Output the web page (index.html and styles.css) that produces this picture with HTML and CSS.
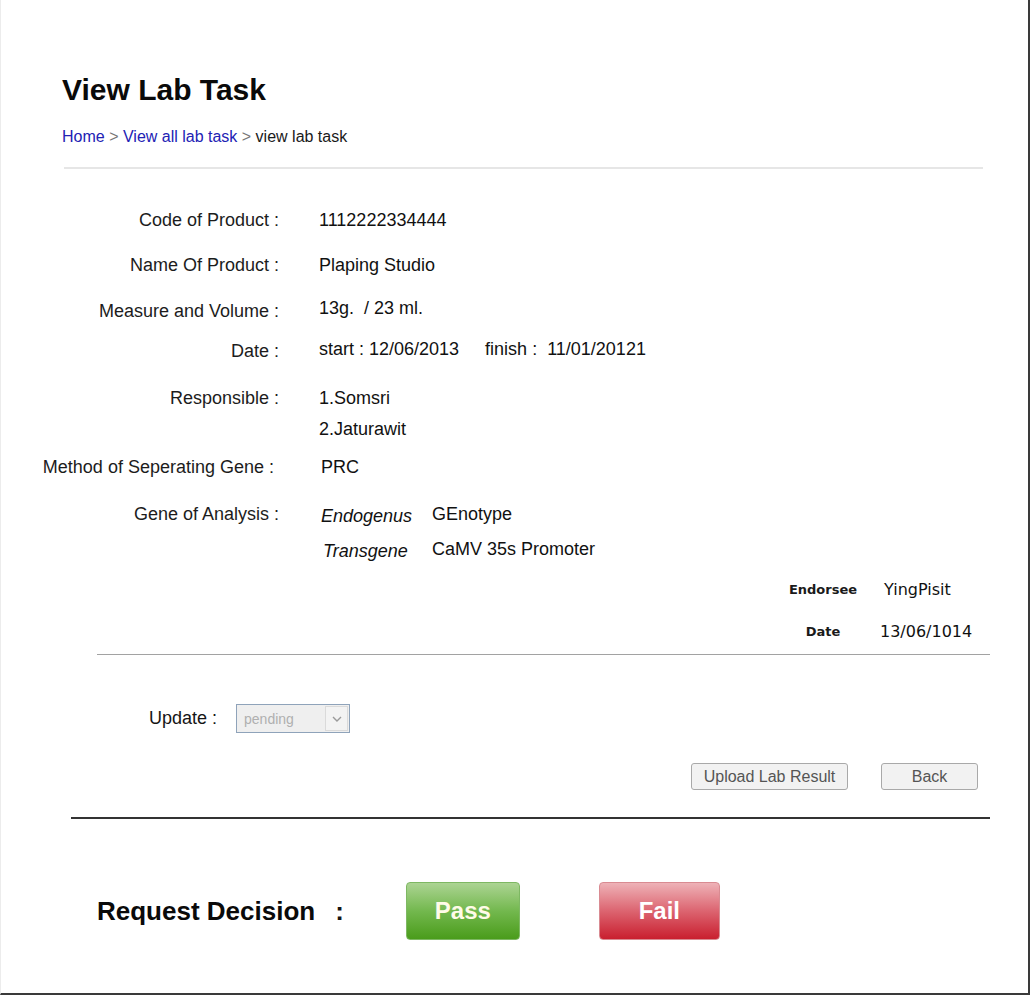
FILE: index.html
```html
<!DOCTYPE html>
<html>
<head>
<meta charset="utf-8">
<title>View Lab Task</title>
<link rel="stylesheet" href="styles.css">
</head>
<body>
<div class="frame">
  <h1 class="title">View Lab Task</h1>
  <div class="crumbs"><a class="crumb-link" href="#">Home</a> <span class="sep">&gt;</span> <a class="crumb-link" href="#">View all lab task</a> <span class="sep">&gt;</span> view lab task</div>
  <div class="divider-light"></div>

  <div class="details">
    <div class="label">Code of Product :</div>
    <div class="value">1112222334444</div>

    <div class="label">Name Of Product :</div>
    <div class="value">Plaping Studio</div>

    <div class="label label-down">Measure and Volume :</div>
    <div class="value value-up">13g.&nbsp; / 23 ml.</div>

    <div class="label">Date :</div>
    <div class="value value-up">start : 12/06/2013<span class="finish">finish :&nbsp; 11/01/20121</span></div>

    <div class="label">Responsible :</div>
    <div class="value">
      <div>1.Somsri</div>
      <div class="second">2.Jaturawit</div>
    </div>

    <div class="label label-method">Method of Seperating Gene :</div>
    <div class="value value-method">PRC</div>

    <div class="label">Gene of Analysis :</div>
    <div class="value gene">
      <div class="gene-kind">Endogenus</div><div class="gene-name">GEnotype</div>
      <div class="gene-kind kind-2">Transgene</div><div class="gene-name">CaMV 35s Promoter</div>
    </div>
  </div>

  <div class="endorse">
    <div class="e-label">Endorsee</div><div class="e-value">YingPisit</div>
    <div class="e-label">Date</div><div class="e-value e-date">13/06/1014</div>
  </div>
  <div class="divider-mid"></div>

  <div class="update">
    <span class="update-label">Update :</span>
    <div class="select">
      <span class="select-text">pending</span>
      <span class="select-arrow"><svg width="10" height="6" viewBox="0 0 10 6"><path d="M1 1 L5 5 L9 1" fill="none" stroke="#9a9a9a" stroke-width="1.4"/></svg></span>
    </div>
  </div>

  <div class="actions">
    <button class="btn btn-upload">Upload Lab Result</button>
    <button class="btn btn-back">Back</button>
  </div>
  <div class="divider-dark"></div>

  <div class="decision">
    <span class="decision-title">Request Decision</span>
    <span class="decision-colon">:</span>
    <button class="big-btn pass">Pass</button>
    <button class="big-btn fail">Fail</button>
  </div>
</div>
</body>
</html>
```

FILE: styles.css
```css
html, body {
  margin: 0;
  padding: 0;
  background: #ffffff;
}
body {
  font-family: "Liberation Sans", Arial, sans-serif;
  color: #151515;
}
.frame {
  box-sizing: border-box;
  width: 1030px;
  height: 995px;
  border-left: 1px solid #ececec;
  border-right: 2px solid #3a3a3a;
  border-bottom: 2px solid #3a3a3a;
  overflow: hidden;
}
.title {
  margin: 73px 0 0 61px;
  font-size: 30px;
  line-height: 34px;
  font-weight: bold;
  color: #0a0a0a;
}
.crumbs {
  margin: 20px 0 0 61px;
  font-size: 16px;
  line-height: 20px;
  color: #1a1a1a;
}
.crumb-link {
  color: #2222b4;
  text-decoration: none;
}
.sep {
  color: #777;
}
.divider-light {
  margin: 20px 0 0 63px;
  width: 919px;
  height: 2px;
  background: #e6e6e6;
}
.details {
  margin-top: 39px;
  display: grid;
  grid-template-columns: 278px 1fr;
  grid-template-rows: 45px 45px 41px 47px 69px 47px auto;
  column-gap: 40px;
  font-size: 18px;
  line-height: 24px;
}
.label {
  text-align: right;
  color: #1c1c1c;
}
.label-down {
  position: relative;
  top: 1px;
}
.value {
  color: #111;
}
.value-up {
  position: relative;
  top: -2px;
}
.finish {
  margin-left: 26px;
}
.second {
  margin-top: 7px;
}
.label-method {
  padding-right: 5px;
}
.value-method {
  padding-left: 2px;
}
.gene {
  display: grid;
  grid-template-columns: 111px auto;
  row-gap: 11px;
  padding-left: 2px;
}
.gene-kind {
  font-style: italic;
  position: relative;
  top: 2px;
}
.kind-2 {
  padding-left: 2px;
}
.endorse {
  margin: 17px 0 0 782px;
  display: grid;
  grid-template-columns: 80px 120px;
  column-gap: 19px;
  row-gap: 18px;
  line-height: 24px;
}
.e-label {
  font-family: "DejaVu Sans", Tahoma, sans-serif;
  font-weight: bold;
  font-size: 13px;
  text-align: center;
  color: #1a1a1a;
}
.e-value {
  font-family: "DejaVu Sans", Tahoma, sans-serif;
  font-size: 16px;
  color: #111;
  padding-left: 2px;
}
.e-date {
  padding-left: 0;
  margin-left: -2px;
}
.divider-mid {
  margin: 10px 0 0 96px;
  width: 893px;
  height: 1px;
  background: #a2a2a2;
}
.update {
  margin: 49px 0 0 148px;
  display: flex;
  align-items: center;
  gap: 19px;
  height: 29px;
}
.update-label {
  font-size: 18px;
  color: #151515;
}
.select {
  box-sizing: border-box;
  width: 114px;
  height: 29px;
  border: 1px solid #8fa3ba;
  background: #efefef;
  display: flex;
  align-items: center;
  justify-content: space-between;
  padding: 0 1px 0 7px;
}
.select-text {
  font-size: 14px;
  color: #b0b0b0;
}
.select-arrow {
  box-sizing: border-box;
  width: 23px;
  height: 25px;
  border: 1px solid #dadada;
  background: #f3f3f3;
  display: flex;
  align-items: center;
  justify-content: center;
}
.actions {
  margin: 30px 0 0 690px;
  display: flex;
  gap: 33px;
}
.btn {
  box-sizing: border-box;
  height: 27px;
  border: 1px solid #a9a9a9;
  border-radius: 3px;
  background: #f2f2f2;
  font-family: "Liberation Sans", Arial, sans-serif;
  font-size: 16px;
  color: #555;
  padding: 0;
}
.btn-upload {
  width: 157px;
}
.btn-back {
  width: 97px;
}
.divider-dark {
  margin: 27px 0 0 70px;
  width: 919px;
  height: 2px;
  background: #333;
}
.decision {
  margin: 63px 0 0 96px;
  display: flex;
  align-items: center;
}
.decision-title {
  font-size: 26px;
  font-weight: bold;
  color: #0a0a0a;
}
.decision-colon {
  font-size: 26px;
  font-weight: bold;
  margin-left: 20px;
}
.big-btn {
  box-sizing: border-box;
  height: 58px;
  border-radius: 4px;
  font-family: "Liberation Sans", Arial, sans-serif;
  font-size: 24px;
  font-weight: bold;
  color: #fffbe8;
  padding: 0;
}
.pass {
  width: 114px;
  margin-left: 62px;
  border: 1px solid #7eb863;
  background: linear-gradient(#acd493, #73b84e 50%, #4a9c1b);
}
.fail {
  width: 121px;
  margin-left: 79px;
  border: 1px solid #d98b92;
  background: linear-gradient(#eeb2b7, #dc6470 50%, #c91f2f);
  color: #fff;
}
```
